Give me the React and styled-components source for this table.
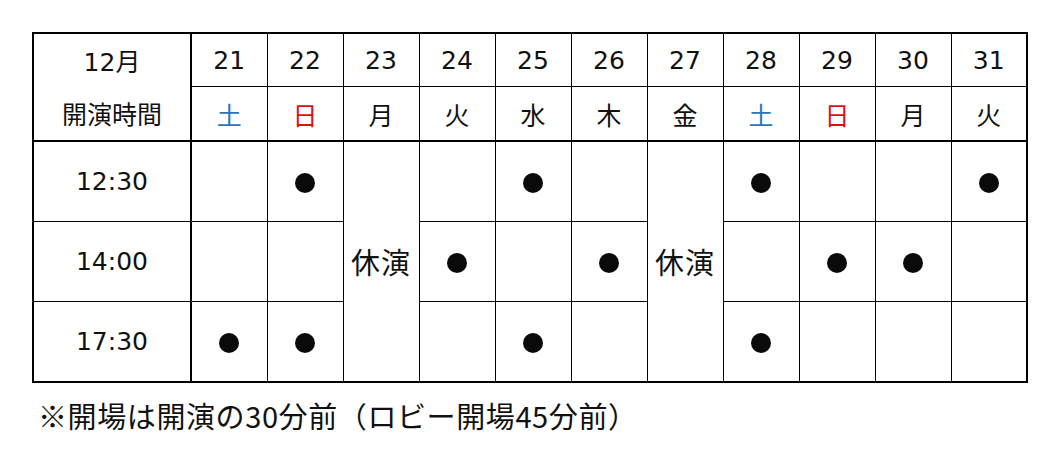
import React from 'react'
import styled, { createGlobalStyle } from 'styled-components'

const GlobalStyle = createGlobalStyle`
  html, body {
    margin: 0;
    padding: 0;
    background: #ffffff;
  }
  body {
    font-family: "DejaVu Sans", "Noto Sans CJK JP", sans-serif;
    color: #111111;
  }
`

const Page = styled.div`
  width: 1062px;
  height: 458px;
  padding: 32px 0 0 32px;
  box-sizing: border-box;
`

const Schedule = styled.table`
  border-collapse: collapse;
  table-layout: fixed;
  width: 996px;
  border: 2px solid #000;
  font-size: 25px;
`

const HeadCell = styled.td`
  height: ${({ $h }) => $h}px;
  padding: 0;
  text-align: center;
  vertical-align: middle;
  border-left: 1px solid #000;
  border-top: ${({ $first }) => ($first ? '2px' : '1px')} solid #000;
  border-bottom: ${({ $last }) => ($last ? '2px' : '1px')} solid #000;
  color: ${({ $color }) => $color || '#111'};
  font-family: ${({ $jp }) => ($jp ? '"Noto Sans CJK JP", sans-serif' : 'inherit')};
`

const LabelCell = styled.td`
  height: ${({ $h }) => $h}px;
  padding: 0;
  text-align: center;
  vertical-align: middle;
  border-right: 2px solid #000;
  border-top: ${({ $top }) => ($top ? '2px solid #000' : 'hidden')};
  border-bottom: ${({ $bottom }) => ($bottom ? '2px solid #000' : 'hidden')};
  font-family: ${({ $jp }) => ($jp ? '"Noto Sans CJK JP", sans-serif' : 'inherit')};
`

const TimeCell = styled.td`
  height: 79px;
  padding: 0;
  text-align: center;
  vertical-align: middle;
  border-right: 2px solid #000;
  border-bottom: 1px solid #000;
`

const SlotCell = styled.td`
  padding: 0;
  text-align: center;
  vertical-align: middle;
  border: 1px solid #000;
`

const ClosedCell = styled(SlotCell)`
  font-family: "Noto Sans CJK JP", sans-serif;
  font-size: 29px;
  letter-spacing: 1px;
  padding-bottom: 2px;
`

const Dot = styled.span`
  display: inline-block;
  width: 20px;
  height: 20px;
  border-radius: 50%;
  background: #0a0a0a;
  vertical-align: middle;
`

const Note = styled.div`
  margin: 14px 0 0 6px;
  font-family: "Noto Sans CJK JP", sans-serif;
  font-size: 29px;
  letter-spacing: 0.6px;
  line-height: 36px;
  color: #111;
`

const days = [
  { d: 21, w: '土', c: '#2e75b6' },
  { d: 22, w: '日', c: '#e01010' },
  { d: 23, w: '月' },
  { d: 24, w: '火' },
  { d: 25, w: '水' },
  { d: 26, w: '木' },
  { d: 27, w: '金' },
  { d: 28, w: '土', c: '#2e75b6' },
  { d: 29, w: '日', c: '#e01010' },
  { d: 30, w: '月' },
  { d: 31, w: '火' },
]

const closed = [23, 27]

const slots = [
  { time: '12:30', on: [22, 25, 28, 31] },
  { time: '14:00', on: [24, 26, 29, 30] },
  { time: '17:30', on: [21, 22, 25, 28] },
]

export default function App() {
  return (
    <Page>
      <GlobalStyle />
      <Schedule>
        <colgroup>
          <col style={{ width: 158 }} />
          {days.map(day => (
            <col key={day.d} style={{ width: 76 }} />
          ))}
        </colgroup>
        <tbody>
          <tr>
            <LabelCell $h={52} $top>12月</LabelCell>
            {days.map(day => (
              <HeadCell key={day.d} $h={52} $first>{day.d}</HeadCell>
            ))}
          </tr>
          <tr>
            <LabelCell $h={53} $bottom $jp>開演時間</LabelCell>
            {days.map(day => (
              <HeadCell key={day.d} $h={53} $last $jp $color={day.c}>
                {day.w}
              </HeadCell>
            ))}
          </tr>
          {slots.map((slot, i) => (
            <tr key={slot.time}>
              <TimeCell>{slot.time}</TimeCell>
              {days.map(day => {
                if (closed.includes(day.d)) {
                  return i === 0 ? (
                    <ClosedCell key={day.d} rowSpan={3}>休演</ClosedCell>
                  ) : null
                }
                return (
                  <SlotCell key={day.d}>
                    {slot.on.includes(day.d) && <Dot />}
                  </SlotCell>
                )
              })}
            </tr>
          ))}
        </tbody>
      </Schedule>
      <Note>※開場は開演の30分前（ロビー開場45分前）</Note>
    </Page>
  )
}
